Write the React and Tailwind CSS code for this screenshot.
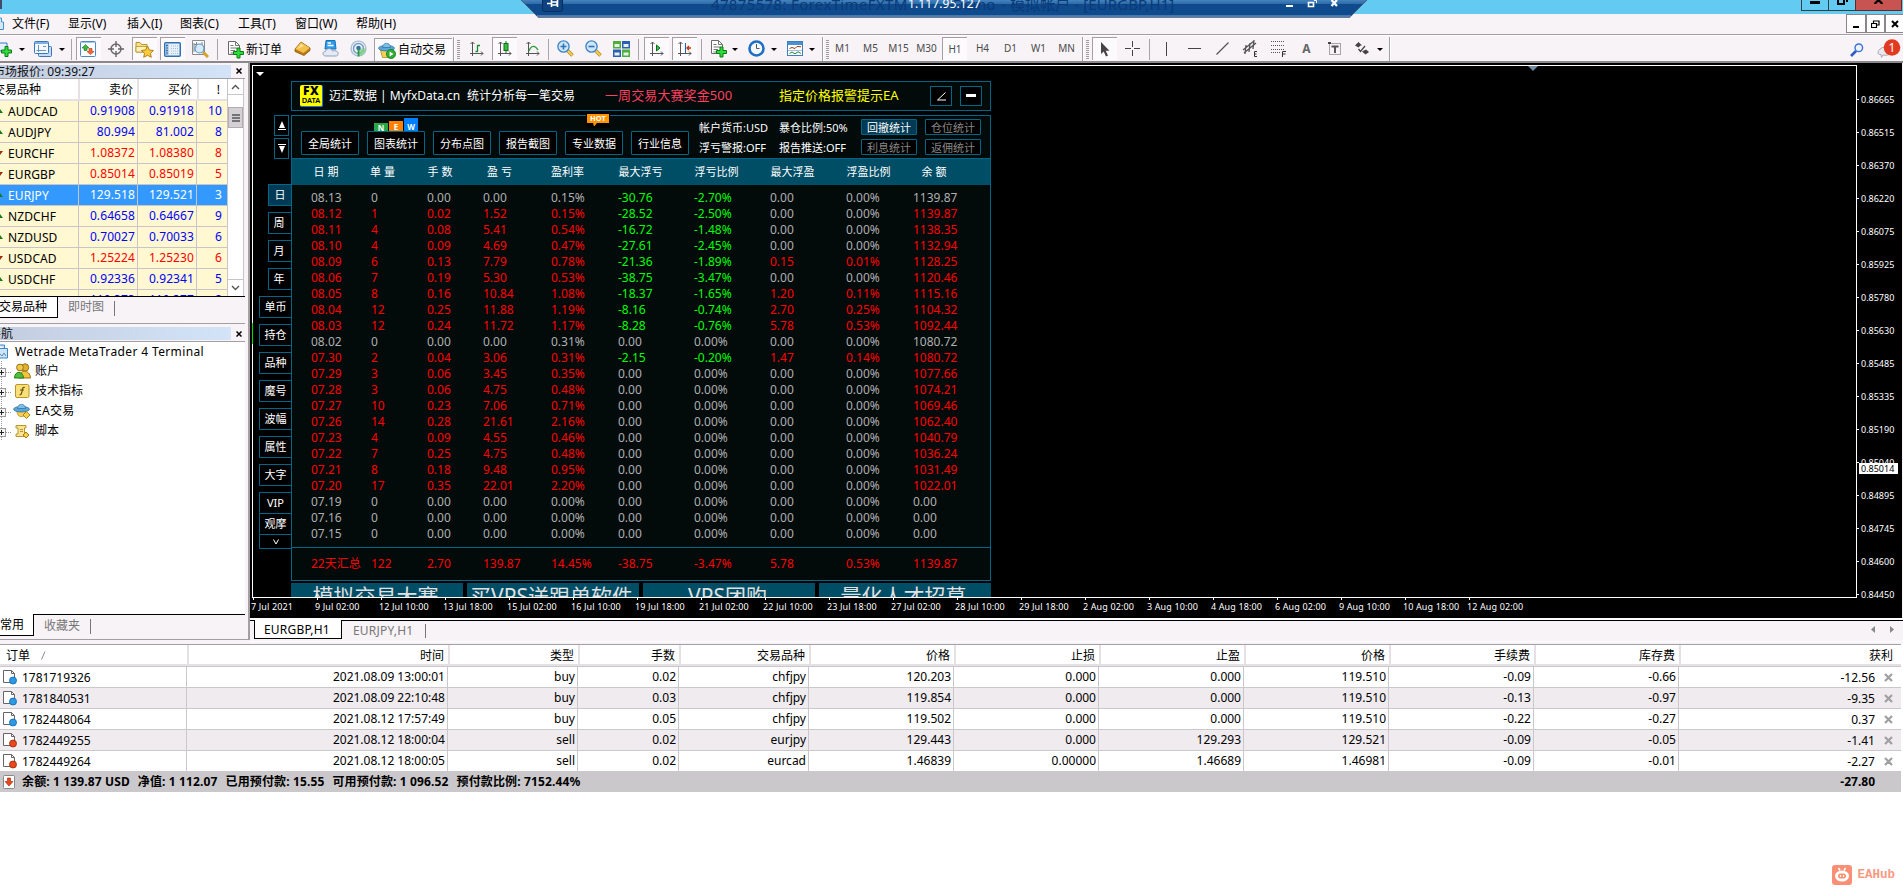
import clsx from 'clsx';

const quotes = [
  ['AUDCAD', '0.91908', '0.91918', '10', 'up'],
  ['AUDJPY', '80.994', '81.002', '8', 'up'],
  ['EURCHF', '1.08372', '1.08380', '8', 'down'],
  ['EURGBP', '0.85014', '0.85019', '5', 'down'],
  ['EURJPY', '129.518', '129.521', '3', 'up', true],
  ['NZDCHF', '0.64658', '0.64667', '9', 'up'],
  ['NZDUSD', '0.70027', '0.70033', '6', 'up'],
  ['USDCAD', '1.25224', '1.25230', '6', 'down'],
  ['USDCHF', '0.92336', '0.92341', '5', 'up'],
  ['USDJPY', '110.373', '110.377', '8', 'up'],
];

const stats = [
  ['08.13', '0', '0.00', '0.00', '0.15%', '-30.76', '-2.70%', '0.00', '0.00%', '1139.87'],
  ['08.12', '1', '0.02', '1.52', '0.15%', '-28.52', '-2.50%', '0.00', '0.00%', '1139.87'],
  ['08.11', '4', '0.08', '5.41', '0.54%', '-16.72', '-1.48%', '0.00', '0.00%', '1138.35'],
  ['08.10', '4', '0.09', '4.69', '0.47%', '-27.61', '-2.45%', '0.00', '0.00%', '1132.94'],
  ['08.09', '6', '0.13', '7.79', '0.78%', '-21.36', '-1.89%', '0.15', '0.01%', '1128.25'],
  ['08.06', '7', '0.19', '5.30', '0.53%', '-38.75', '-3.47%', '0.00', '0.00%', '1120.46'],
  ['08.05', '8', '0.16', '10.84', '1.08%', '-18.37', '-1.65%', '1.20', '0.11%', '1115.16'],
  ['08.04', '12', '0.25', '11.88', '1.19%', '-8.16', '-0.74%', '2.70', '0.25%', '1104.32'],
  ['08.03', '12', '0.24', '11.72', '1.17%', '-8.28', '-0.76%', '5.78', '0.53%', '1092.44'],
  ['08.02', '0', '0.00', '0.00', '0.31%', '0.00', '0.00%', '0.00', '0.00%', '1080.72'],
  ['07.30', '2', '0.04', '3.06', '0.31%', '-2.15', '-0.20%', '1.47', '0.14%', '1080.72'],
  ['07.29', '3', '0.06', '3.45', '0.35%', '0.00', '0.00%', '0.00', '0.00%', '1077.66'],
  ['07.28', '3', '0.06', '4.75', '0.48%', '0.00', '0.00%', '0.00', '0.00%', '1074.21'],
  ['07.27', '10', '0.23', '7.06', '0.71%', '0.00', '0.00%', '0.00', '0.00%', '1069.46'],
  ['07.26', '14', '0.28', '21.61', '2.16%', '0.00', '0.00%', '0.00', '0.00%', '1062.40'],
  ['07.23', '4', '0.09', '4.55', '0.46%', '0.00', '0.00%', '0.00', '0.00%', '1040.79'],
  ['07.22', '7', '0.25', '4.75', '0.48%', '0.00', '0.00%', '0.00', '0.00%', '1036.24'],
  ['07.21', '8', '0.18', '9.48', '0.95%', '0.00', '0.00%', '0.00', '0.00%', '1031.49'],
  ['07.20', '17', '0.35', '22.01', '2.20%', '0.00', '0.00%', '0.00', '0.00%', '1022.01'],
  ['07.19', '0', '0.00', '0.00', '0.00%', '0.00', '0.00%', '0.00', '0.00%', '0.00'],
  ['07.16', '0', '0.00', '0.00', '0.00%', '0.00', '0.00%', '0.00', '0.00%', '0.00'],
  ['07.15', '0', '0.00', '0.00', '0.00%', '0.00', '0.00%', '0.00', '0.00%', '0.00'],
];

const total = ['22天汇总', '122', '2.70', '139.87', '14.45%', '-38.75', '-3.47%', '5.78', '0.53%', '1139.87'];

const times = [
  '7 Jul 2021', '9 Jul 02:00', '12 Jul 10:00', '13 Jul 18:00', '15 Jul 02:00', '16 Jul 10:00', '19 Jul 18:00',
  '21 Jul 02:00', '22 Jul 10:00', '23 Jul 18:00', '27 Jul 02:00', '28 Jul 10:00', '29 Jul 18:00', '2 Aug 02:00',
  '3 Aug 10:00', '4 Aug 18:00', '6 Aug 02:00', '9 Aug 10:00', '10 Aug 18:00', '12 Aug 02:00',
];

const prices = [
  '0.86665', '0.86515', '0.86370', '0.86220', '0.86075', '0.85925', '0.85780', '0.85630',
  '0.85485', '0.85335', '0.85190', '0.85040', '0.84895', '0.84745', '0.84600', '0.84450',
];

const orders = [
  ['1781719326', '2021.08.09 13:00:01', 'buy', '0.02', 'chfjpy', '120.203', '0.000', '0.000', '119.510', '-0.09', '-0.66', '-12.56'],
  ['1781840531', '2021.08.09 22:10:48', 'buy', '0.03', 'chfjpy', '119.854', '0.000', '0.000', '119.510', '-0.13', '-0.97', '-9.35'],
  ['1782448064', '2021.08.12 17:57:49', 'buy', '0.05', 'chfjpy', '119.502', '0.000', '0.000', '119.510', '-0.22', '-0.27', '0.37'],
  ['1782449255', '2021.08.12 18:00:04', 'sell', '0.02', 'eurjpy', '129.443', '0.000', '129.293', '129.521', '-0.09', '-0.05', '-1.41'],
  ['1782449264', '2021.08.12 18:00:05', 'sell', '0.02', 'eurcad', '1.46839', '0.00000', '1.46689', '1.46981', '-0.09', '-0.01', '-2.27'],
];

/* ---------- toolbar parts ---------- */

const Cell = ({ children, pressed }) => (
  <div className="w-7 h-[25px] shrink-0 flex justify-center">
    <div
      className={clsx(
        'w-[25px] h-[23px] flex items-center justify-center',
        pressed && 'bg-[#fcfafc] border-t border-l border-[#a3a0a3] border-r-white border-b-white'
      )}
    >
      {children}
    </div>
  </div>
);

const Sep = ({ className }) => (
  <div className={clsx('flex justify-center shrink-0 h-[21px]', className)}>
    <div className="w-px bg-[#a8a5a8]" />
  </div>
);

const GroupEnd = ({ className }) => (
  <div className={clsx('flex shrink-0 h-[25px]', className)}>
    <div className="w-px bg-[#a0a0a0]" />
    <div className="w-px bg-white" />
  </div>
);

const Grip = ({ className }) => (
  <div className={clsx('shrink-0 flex', className)}>
    <svg width="3" height="20">
      {[0, 2, 4, 6, 8, 10, 12, 14, 16, 18].map((y) => (
        <rect key={y} y={y} width="3" height="1" fill="#a09da0" />
      ))}
    </svg>
  </div>
);

const Caret = () => (
  <svg width="6" height="3" className="shrink-0"><path d="M0 0H6L3 3Z" fill="#000" /></svg>
);

const Plus = ({ x = 0, y = 0 }) => (
  <path transform={`translate(${x} ${y})`} d="M4 0.5H7V4H10.5V7H7V10.5H4V7H0.5V4H4Z" fill="#2fdc3a" stroke="#0a7a18" />
);

const Axes = ({ children }) => (
  <svg width="15" height="16" viewBox="0 0 15 16" fill="none" stroke="#555">
    <path d="M3.5 1V15M1 12.5H14M1.5 3L3.5 1L5.5 3M12 10.5L14 12.5L12 14.5" />
    {children}
  </svg>
);

const Magnifier = ({ minus }) => (
  <svg width="17" height="17" viewBox="0 0 17 17">
    <path d="M10.5 10.5L15.5 15.5" stroke="#b8891a" strokeWidth="3.6" />
    <path d="M10.5 10.5L15.3 15.3" stroke="#f4d35e" strokeWidth="1.8" />
    <circle cx="6.5" cy="6.5" r="5.6" fill="#cfe6f8" stroke="#3f87c8" strokeWidth="1.4" />
    <path d={minus ? 'M3.5 6.5H9.5' : 'M3.5 6.5H9.5M6.5 3.5V9.5'} stroke="#2d73b5" strokeWidth="1.6" />
  </svg>
);

const WindowsIcon = () => (
  <svg width="18" height="18" viewBox="0 0 18 18" stroke="#3b76b8">
    <rect x="4.5" y="5.5" width="13" height="10" rx="1" fill="#c6dcf2" />
    <rect x="0.5" y="0.5" width="14" height="12" rx="1" fill="#f2f8fd" />
    <path d="M1 2H14" strokeWidth="2" stroke="#7fb0de" />
    <path d="M4.5 4V11M2.5 9.5H12M9 5.5H12" stroke="#6a94ba" />
  </svg>
);

const MarketIcon = () => (
  <svg width="17" height="17" viewBox="0 0 17 17">
    <rect x="0.5" y="0.5" width="15" height="15" rx="1" fill="#fff" stroke="#4a88c6" />
    <path d="M1 1.5H15" stroke="#a4c8ea" />
    <path d="M5.5 3.5L9 7H7V9.5H4V7H2Z" fill="#3cb93c" stroke="#0f7d1c" strokeWidth=".6" />
    <path d="M10.5 13.5L7 10.500H9V7.500H12V10.500H14Z" fill="#f06a3c" stroke="#b6310c" strokeWidth=".6" />
  </svg>
);

const TargetIcon = () => (
  <svg width="16" height="16" viewBox="0 0 16 16" fill="none" stroke="#666" strokeWidth="1.4">
    <circle cx="8" cy="8" r="5" />
    <path d="M8 0V6M8 10V16M0 8H6M10 8H16" />
  </svg>
);

const FolderStar = () => (
  <svg width="19" height="17" viewBox="0 0 19 17">
    <path d="M1 1.500H5L6.500 3.500H12V11H1Z" fill="#f9e08c" stroke="#b99228" />
    <path d="M1 5.500H12V11H1Z" fill="#fff2b8" stroke="#b99228" strokeWidth=".8" />
    <path d="M12.500 5L14.400 9L18.500 9.500L15.500 12.300L16.300 16.300L12.500 14.300L8.700 16.300L9.500 12.300L6.500 9.500L10.600 9Z" fill="#fbc93a" stroke="#a8780f" strokeWidth=".9" />
  </svg>
);

const NavIcon = () => (
  <svg width="17" height="15" viewBox="0 0 17 15">
    <rect x="0.750" y="0.750" width="15.500" height="13.500" rx="1" fill="#e6f1fb" stroke="#2e70b4" strokeWidth="1.500" />
    <rect x="1.500" y="1.500" width="3" height="12" fill="#8fbbe4" />
    <path d="M7 4H14M7 6.500H14M7 9H14M7 11.500H14" stroke="#a8bfd6" strokeDasharray="1 1" />
    <path d="M3 3V12" stroke="#123" strokeDasharray="1 1.500" />
  </svg>
);

const TesterIcon = () => (
  <svg width="18" height="18" viewBox="0 0 18 18">
    <path d="M1.500 0.500H13.500V14.500H1.500Z" fill="#fafafa" stroke="#8a8a8a" />
    <path d="M3 3V12M5.500 2V8M11 2V6M3 4.500H5" stroke="#7a8898" />
    <path d="M12 12L17 17" stroke="#d4a12a" strokeWidth="3" />
    <circle cx="8.500" cy="8.500" r="4.500" fill="#cfe5f7cc" stroke="#5d93c5" strokeWidth="1.200" />
  </svg>
);

const NewDoc = () => (
  <svg width="17" height="18" viewBox="0 0 17 18">
    <path d="M1.500 0.500H8.500L12.500 4.500V13.500H1.500Z" fill="#fff" stroke="#6a6a6a" />
    <path d="M8.500 0.500V4.500H12.500M3.500 4.500H6.500M3.500 7H10M3.500 9.500H8M3.500 12H7" stroke="#777" fill="none" />
    <Plus x={6} y={6.5} />
  </svg>
);

const BookIcon = () => (
  <svg width="17" height="15" viewBox="0 0 17 15">
    <path d="M1 8L7 1L16 7V9.500L10 14.500L1 10.500Z" fill="#b87a14" stroke="#8d5a08" strokeWidth=".8" />
    <path d="M1.300 8L7 1.300L15.700 7L9.500 12Z" fill="#f5c14a" />
    <path d="M3 8L7.200 3L10 5Z" fill="#fde29a" />
  </svg>
);

const CloudIcon = () => (
  <svg width="17" height="17" viewBox="0 0 17 17">
    <path d="M4 0.500H13L14 9H3Z" fill="#2f9bea" stroke="#1670ba" />
    <path d="M5.500 5.500H11.500M5.500 3H9" stroke="#fff" strokeWidth="1.300" />
    <path d="M4 16C0 16 0 11.500 3.500 11.500C4 8 9.500 7.500 10.500 11C14 9.800 17 12 16 14.500C15.700 15.700 15 16 13.500 16Z" fill="#e3eaf4" stroke="#8597b4" strokeWidth=".9" />
  </svg>
);

const SignalIcon = () => (
  <svg width="17" height="17" viewBox="0 0 17 17" fill="none">
    <circle cx="8.500" cy="8.500" r="7.400" stroke="#a9c0d4" strokeWidth="1.400" />
    <circle cx="8.500" cy="8.500" r="5" stroke="#6f9ec6" strokeWidth="1.500" />
    <path d="M8.500 8.500V16.500A8 8 0 0 0 16 8.500Z" fill="#7fcf86" opacity=".75" />
    <circle cx="8.500" cy="8" r="2.300" fill="#3271ae" />
    <path d="M8.500 9V16.500" stroke="#2a9a3c" strokeWidth="1.800" />
  </svg>
);

const Expert = ({ play }) => (
  <svg width="18" height="17" viewBox="0 0 18 17">
    {play && <path d="M2.500 8L4.500 15.500H12L14 8Z" fill="#f6ce58" stroke="#b48a1a" strokeWidth=".8" />}
    {!play && <path d="M4 8C4 13 7 14.500 11 13L13 8Z" fill="#f6ce58" stroke="#b48a1a" strokeWidth=".8" />}
    <ellipse cx="8.500" cy="6.200" rx="8" ry="2.800" fill="#59a7d8" stroke="#2b6f9f" strokeWidth=".7" />
    <path d="M4.500 5.500C4.500 0 12.500 0 12.500 5.500Z" fill="#7cc0ea" stroke="#2b6f9f" strokeWidth=".7" />
    {play ? (
      <>
        <circle cx="13" cy="12" r="4.600" fill="#2fae2f" stroke="#127012" strokeWidth=".7" />
        <path d="M11.600 9.500L15.500 12L11.600 14.500Z" fill="#fff" />
      </>
    ) : (
      <path d="M13.500 8.500L17 12L13.500 15.500L10 12Z" fill="#f6cf4c" stroke="#a57c10" strokeWidth=".9" />
    )}
  </svg>
);

const Tiles = () => (
  <svg width="17" height="16" viewBox="0 0 17 16">
    <rect width="8" height="7.500" fill="#4caf3a" /><rect x="9" width="8" height="7.500" fill="#2c5fb8" />
    <rect y="8.500" width="8" height="7.500" fill="#2c5fb8" /><rect x="9" y="8.500" width="8" height="7.500" fill="#4caf3a" />
    <path d="M1.500 3H6.500V6H1.500ZM10.500 3H15.500V6H10.500ZM1.500 11.500H6.500V14.500H1.500ZM10.500 11.500H15.500V14.500H10.500Z" fill="#e8f3e6" />
  </svg>
);

const Clock = () => (
  <svg width="17" height="17" viewBox="0 0 17 17">
    <circle cx="8.500" cy="8.500" r="7" fill="#f3f7fb" stroke="#1f6fc4" strokeWidth="2.600" />
    <path d="M8.500 4V8.500H11.500" stroke="#555" fill="none" />
  </svg>
);

const Template = () => (
  <svg width="17" height="16" viewBox="0 0 17 16" fill="none">
    <rect x="0.500" y="0.500" width="15" height="14" fill="#fff" stroke="#3a7fc0" />
    <path d="M1 2.500H15" stroke="#4a90d2" strokeWidth="3" />
    <path d="M2.500 7.500L5 6.500L8 7.500L10 5.500L14 5.800" stroke="#9a3a1a" />
    <path d="M1 9.500H15" stroke="#9cc0e0" />
    <path d="M2.500 12.500L5 11L8 12.800L11 10.800L14 12.500" stroke="#2a8a3a" />
  </svg>
);

function Toolbar() {
  return (
    <div className="h-[26px] pt-[2px] flex items-center bg-[#f7f3f7] border-t border-white shrink-0 overflow-hidden text-[10px] text-[#4a4a4a]">
      <div className="w-7 shrink-0 flex items-center gap-[7px]">
        <svg width="12" height="16" viewBox="0 0 12 16">
          <path d="M0 1H7V9H0" fill="#e4f0fb" stroke="#3b76b8" />
          <Plus x={1} y={4} />
        </svg>
        <Caret />
      </div>
      <div className="w-10 shrink-0 flex items-center gap-[7px] pl-1.5"><WindowsIcon /><Caret /></div>
      <Sep className="w-1.5" />
      <Cell pressed><MarketIcon /></Cell>
      <Cell><TargetIcon /></Cell>
      <Cell pressed><FolderStar /></Cell>
      <Cell pressed><NavIcon /></Cell>
      <Cell><TesterIcon /></Cell>
      <Sep className="w-[7px]" />
      <div className="w-[67px] shrink-0 pl-[6px] flex items-center gap-[2px] text-xs text-black whitespace-nowrap">
        <NewDoc /><span className="leading-4">新订单</span>
      </div>
      <Cell><BookIcon /></Cell>
      <Cell><CloudIcon /></Cell>
      <Cell><SignalIcon /></Cell>
      <div className="ml-[2px] w-[78px] h-[23px] shrink-0 flex items-center gap-[2px] pl-[3px] text-xs text-black bg-[#fcfafc] border-t border-l border-[#a3a0a3]">
        <Expert play /><span className="leading-4 whitespace-nowrap">自动交易</span>
      </div>
      <GroupEnd className="w-1 ml-px" />
      <Grip className="w-[5px]" />
      <Cell><Axes><path d="M8.500 4V11M8.500 10.500H6.500M8.500 4.500H11" stroke="#1e8a2e" strokeWidth="1.300" /></Axes></Cell>
      <Cell pressed><Axes><path d="M9 0V12" stroke="#146b20" /><rect x="7" y="2.500" width="4" height="7" fill="#2fc43a" stroke="#146b20" /></Axes></Cell>
      <Cell><Axes><path d="M4 10C6 4 10 4 13 9" stroke="#2a9a3a" strokeWidth="1.300" /></Axes></Cell>
      <Sep className="w-[5px]" />
      <Cell><Magnifier /></Cell>
      <Cell><Magnifier minus /></Cell>
      <Cell><Tiles /></Cell>
      <Sep className="w-[7px]" />
      <Cell pressed><Axes><path d="M7.500 4L11 7L7.500 10Z" fill="#2fc43a" stroke="#146b20" /></Axes></Cell>
      <Cell pressed><Axes><path d="M8.500 2V12" stroke="#1f5fa8" /><path d="M14 7H10M12 5L10 7L12 9" stroke="#c03a10" strokeWidth="1.400" /></Axes></Cell>
      <Sep className="w-1.5" />
      {[NewDoc, Clock, Template].map((Icon, i) => (
        <div key={i} className="w-[38.500px] shrink-0 flex items-center">
          <Cell><Icon /></Cell><Caret />
        </div>
      ))}
      <GroupEnd className="w-1 ml-[2px]" />
      <Grip className="w-[3px]" />
      {['M1', 'M5', 'M15', 'M30', 'H1', 'H4', 'D1', 'W1', 'MN'].map((tf) => (
        <Cell key={tf} pressed={tf === 'H1'}>{tf}</Cell>
      ))}
      <GroupEnd className="w-1 ml-px" />
      <Grip className="w-[5px]" />
      <Cell pressed>
        <svg width="11" height="15" viewBox="0 0 11 15"><path d="M1 0V12L3.700 9.500L6 14.500L8 13.500L5.700 8.800H9.500Z" fill="#444" /></svg>
      </Cell>
      <Cell><svg width="15" height="15"><path d="M7.500 0V6M7.500 9V15M0 7.500H6M9 7.500H15" stroke="#444" /></svg></Cell>
      <Sep className="w-1.5" />
      <Cell><svg width="15" height="14"><path d="M7.500 0V14" stroke="#444" /></svg></Cell>
      <Cell><svg width="13" height="13"><path d="M0 6.500H13" stroke="#444" /></svg></Cell>
      <Cell><svg width="13" height="13"><path d="M0.500 12.500L12.500 0.500" stroke="#555" strokeWidth="1.200" /></svg></Cell>
      <Cell>
        <svg width="17" height="17" viewBox="0 0 17 17" fill="none" stroke="#555">
          <path d="M1 10L12 1M2 13L14 3M4 5L3 14M8 3L7 12M12 0L11 9" strokeWidth="1.300" />
          <path d="M15 11.500H12.500V16.500H15M12.500 14H14.500" stroke="#333" />
        </svg>
      </Cell>
      <Cell>
        <svg width="15" height="17" viewBox="0 0 15 17" fill="none" stroke="#555">
          <path d="M0 1.500H14M0 5.500H14M0 9.500H14M0 12.500H9" strokeDasharray="1 1" />
          <path d="M11.500 17V11.500H15M11.500 14H14.500" stroke="#333" />
        </svg>
      </Cell>
      <Cell><span className="text-[12px] font-bold text-[#666]">A</span></Cell>
      <Cell>
        <svg width="14" height="14" viewBox="0 0 14 14" fill="none">
          <rect x="1.500" y="1.500" width="11" height="11" stroke="#555" strokeDasharray="1 1" />
          <rect width="3" height="2" fill="#444" />
          <path d="M3.500 4.500H10.500M7 4.500V11" stroke="#555" strokeWidth="2" />
        </svg>
      </Cell>
      <Cell>
        <svg width="15" height="13" viewBox="0 0 15 13">
          <path d="M3.500 0L7 3.500H5.500L3.500 5.500L0 3.500ZM10.500 12.500L7 9.500L9 8.500L11 7.500L14 10Z" fill="#444" />
          <path d="M3.500 7L5.500 9.500L10 4" stroke="#444" fill="none" strokeWidth="1.300" />
        </svg>
      </Cell>
      <Caret />
      <GroupEnd className="w-1 ml-[6px]" />
      <div className="flex-1" />
      <svg width="14" height="14" viewBox="0 0 14 14" fill="none" className="shrink-0">
        <path d="M1 13L6 8" stroke="#2a5fc0" strokeWidth="2.600" />
        <circle cx="8.800" cy="4.800" r="3.800" stroke="#3a72d8" strokeWidth="1.400" fill="#eef4ff" />
      </svg>
      <svg width="27" height="22" viewBox="0 0 27 22" className="ml-[12px] -mt-[2px] shrink-0">
        <path d="M2 15C2 11 7 8 13 9L15 15C13 17.500 9 17.500 7 17L5.500 19.500L5 16.500C3 16.500 2 16 2 15Z" fill="#e8e8ee" stroke="#a8a8b0" />
        <circle cx="16" cy="9.500" r="8.300" fill="#e23a20" />
        <text x="16" y="13.700" textAnchor="middle" fontSize="12" fill="#fff">1</text>
      </svg>
    </div>
  );
}

/* ---------- title + menu ---------- */

function TitleBar() {
  return (
    <div className="h-[14px] bg-[#63cbf1] flex justify-end relative shrink-0">
      <div className="absolute left-0 top-0 w-[2px] h-[9px] bg-[#444b6a]" />
      {/* remote session bar hangs from the top edge over the menu */}
      <div className="absolute left-[521px] top-0 w-[847px] h-[18px] z-10">
        <svg width="847" height="18" className="absolute inset-0">
          <defs>
            <linearGradient id="rdp" x1="0" y1="0" x2="0" y2="1">
              <stop offset="0" stopColor="#4584bd" />
              <stop offset=".2" stopColor="#2f6dab" />
              <stop offset=".21" stopColor="#0f4a8c" />
              <stop offset="1" stopColor="#0f4a8c" />
            </linearGradient>
          </defs>
          <path d="M0 0H846L829 17.500H17Z" fill="url(#rdp)" />
          <path d="M0 0L17 17H829L846 0" fill="none" stroke="#4a5a78" />
          <path d="M16 16H830" stroke="#7fa6cf" />
        </svg>
        <div className="relative h-4 pl-[190px] -mt-[5px] flex text-[15px] leading-[18px] text-[#0a3a78] whitespace-nowrap">
          <span className="w-[237px] tracking-[0.35px]">47875578: ForexTimeFXTM</span>
          <span className="w-[53px]">-Demo</span>
          <span className="tracking-[0.1px]">- 模拟帐户 - [EURGBP,H1]</span>
        </div>
        <span className="absolute left-[387px] -top-[4px] text-[12px] leading-4 tracking-[0.1px] text-white">1.117.95.127</span>
        <svg width="22" height="12" className="absolute left-[21px] top-0">
          <rect x=".5" y="-5" width="20" height="16.500" rx="2" fill="#0f4380" stroke="#072c5c" />
          <path d="M5 3.500H9M9.500 0V7M9.500 2H15V5H9.500M15.500 0V7" stroke="#fff" strokeWidth="1.600" fill="none" />
        </svg>
        <svg width="60" height="8" className="absolute left-[764px] top-0" fill="none" stroke="#fff">
          <path d="M1 6H8" strokeWidth="2" />
          <path d="M23.500 2.500H28.500V6.500H23.500Z" strokeWidth="1.600" />
          <path d="M29 0.500H31.500V3" />
          <path d="M46.500 0L52 6M52 0L46.500 6" strokeWidth="2.200" />
        </svg>
      </div>
      <div className="flex h-[11px] mr-[1px]">
        <div className="w-[28px] border border-t-0 border-[#33403f] flex justify-center"><div className="w-[10px] h-[3px] mt-px bg-black" /></div>
        <div className="w-[26px] border-b border-[#33403f] flex justify-center">
          <svg width="11" height="5"><path d="M1 0V4H7V0M10 0V2" fill="none" stroke="#000" strokeWidth="2" /></svg>
        </div>
        <div className="w-[47px] border border-t-0 border-[#5d2b2b] bg-[#c75450] flex justify-center">
          <svg width="9" height="4"><path d="M0.500 4L4.500 0L8.500 4" fill="none" stroke="#000" strokeWidth="2.200" /></svg>
        </div>
      </div>
    </div>
  );
}

function MenuBar() {
  const items = [
    ['文件(F)', 'w-14'], ['显示(V)', 'w-[59px]'], ['插入(I)', 'w-[53px]'], ['图表(C)', 'w-[58px]'],
    ['工具(T)', 'w-[57px]'], ['窗口(W)', 'w-[61px]'], ['帮助(H)', 'w-14'],
  ];
  return (
    <div className="h-[21px] flex items-center bg-[#f7f3f7] border-b border-[#a39fa3] text-xs text-black shrink-0">
      <svg width="4" height="14" className="mr-2"><path d="M0 1H1.500V5H3.500V12.500H0" fill="#d3e9fa" stroke="#4a90c8" /></svg>
      {items.map(([label, w]) => (
        <div key={label} className={clsx('leading-4 shrink-0 whitespace-nowrap', w)}>{label}</div>
      ))}
      <div className="ml-auto self-start flex h-[19px]">
        <div className="w-[20px] border border-[#8a858a] bg-white flex items-center justify-center"><div className="w-[6px] h-[2px] mt-[7px] bg-black" /></div>
        <div className="w-[19px] border border-[#8a858a] bg-white flex items-center justify-center">
          <svg width="9" height="8" fill="none" stroke="#000"><path d="M0.500 3.500H5.500V7.500H0.500ZM2.500 3V1H8V5H6" strokeWidth="1.200" /></svg>
        </div>
        <div className="w-[18px] border border-r-0 border-[#8a858a] bg-white flex items-center justify-center">
          <svg width="8" height="8"><path d="M1 1L7 7M7 1L1 7" stroke="#000" strokeWidth="2" /></svg>
        </div>
      </div>
    </div>
  );
}

/* ---------- left side ---------- */

const PanelTitle = ({ children, shift, className }) => (
  <div className={clsx('flex items-center bg-[#f7f3f7] shrink-0', className)}>
    <div className="w-[231px] h-[13px] overflow-hidden bg-linear-to-r from-[#c3cde0] to-[#d3e4f8] text-xs leading-[13px] text-[#111]">
      <div className={clsx('whitespace-nowrap', shift)}>{children}</div>
    </div>
    <svg width="6" height="6" className="ml-[5px]"><path d="M0.500 0.500L5.500 5.500M5.500 0.500L0.500 5.500" stroke="#000" strokeWidth="1.500" /></svg>
  </div>
);

function MarketWatch() {
  return (
    <div className="flex flex-col shrink-0 h-[260px]">
      <PanelTitle className="mt-px h-[14px]" shift="-ml-[7px]">市场报价: 09:39:27</PanelTitle>
      <div className="flex h-[218px] border-t border-[#a39fa3] overflow-hidden shrink-0">
        <div className="w-[227px] shrink-0 text-xs">
          <div className="flex h-[22px] leading-[21px] border-b-2 border-[#e4e0e4] bg-white text-black">
            <div className="w-[80px] border-r-2 border-[#e4e0e4]"><span className="-ml-[7px]">交易品种</span></div>
            <div className="w-[59px] border-r-2 border-[#e4e0e4] text-right pr-1">卖价</div>
            <div className="w-[60px] border-r-2 border-[#e4e0e4] text-right pr-[5px]">买价</div>
            <div className="w-[28px] text-right pr-[7px]">!</div>
          </div>
          {quotes.map(([name, bid, ask, spread, dir, selected]) => (
            <div
              key={name}
              className={clsx(
                'flex h-[21px] leading-[19px] border-b border-[#c8c4c8] tracking-[0.1px]',
                selected ? 'bg-[#3399ff] text-white' : 'bg-[#fff8d1]',
                !selected && (dir === 'up' ? 'text-[#0000ff]' : 'text-[#ff0000]')
              )}
            >
              <div className={clsx('w-[79px] border-r border-[#c8c4c8] flex items-center', !selected && 'text-black')}>
                <svg width="3" height="4" className="mr-[5px]">
                  <path d={dir === 'up' ? 'M0 0L3 4H0Z' : 'M0 0H3L0 4Z'} fill={dir === 'up' ? '#1a7a1a' : '#a02a10'} />
                </svg>
                {name}
              </div>
              <div className="w-[59px] border-r border-[#c8c4c8] text-right pr-[2px]">{bid}</div>
              <div className="w-[59px] border-r border-[#c8c4c8] text-right pr-[2px]">{ask}</div>
              <div className="w-[30px] text-right pr-[5px]">{spread}</div>
            </div>
          ))}
        </div>
        <div className="w-[17px] flex flex-col border-x border-[#c8c4c8] bg-white">
          <div className="h-4 flex items-center justify-center border-b border-[#c8c4c8]">
            <svg width="9" height="6"><path d="M1 5L4.500 1.500L8 5" fill="none" stroke="#555" strokeWidth="1.400" /></svg>
          </div>
          <div className="mt-[12px] h-[21px] border border-[#b0acb0] bg-[#d4d0d4] flex items-center justify-center">
            <svg width="8" height="8"><path d="M0 1H8M0 4H8M0 7H8" stroke="#555" strokeWidth="1.500" /></svg>
          </div>
          <div className="mt-auto h-[17px] flex items-center justify-center border-t border-[#c8c4c8]">
            <svg width="9" height="6"><path d="M1 1L4.500 4.500L8 1" fill="none" stroke="#555" strokeWidth="1.400" /></svg>
          </div>
        </div>
      </div>
      <div className="flex h-[25px] border-t border-black bg-[#f7f3f7] text-xs shrink-0 overflow-hidden">
        <div className="w-[58px] h-[22px] -mt-px bg-white border-r border-b border-black leading-[21px] whitespace-nowrap"><span className="-ml-px">交易品种</span></div>
        <div className="ml-[10px] leading-[20px] text-[#777]">即时图</div>
        <div className="ml-[10px] mt-[4px] h-[15px] w-px bg-[#777]" />
      </div>
    </div>
  );
}

const TreeRow = ({ icon, children }) => (
  <div className="flex items-center h-5">
    <svg width="13" height="20" className="shrink-0">
      <path d="M1.500 0V20M6 11.500H12" stroke="#999" strokeDasharray="1 1" />
      <rect x="-2.500" y="7.500" width="8" height="8" fill="#f4f4f4" stroke="#999" />
      <path d="M0 11.500H4M1.500 9V14" stroke="#222" />
    </svg>
    <div className="w-[18px] flex justify-center">{icon}</div>
    <span className="ml-[4px] leading-5">{children}</span>
  </div>
);

function Navigator() {
  return (
    <div className="flex flex-col flex-1 min-h-0 border-t border-[#a39fa3]">
      <PanelTitle className="mt-[2px] h-[15px]" shift="-ml-[11px]">导航</PanelTitle>
      <div className="flex-1 min-h-0 border-t border-[#a39fa3] bg-white text-xs text-black">
        <div className="flex items-center h-[19px] tracking-[0.37px]">
          <svg width="9" height="15">
            <path d="M-2 1H4.500V5M-2 4.500H7.500V14H-2Z" fill="#cfe4f7" stroke="#3a86c8" />
            <path d="M0 10L2 12L4 9L6 12" fill="none" stroke="#5c8ab8" />
          </svg>
          <span className="ml-[6px]">Wetrade MetaTrader 4 Terminal</span>
        </div>
        <TreeRow
          icon={
            <svg width="17" height="16" viewBox="0 0 17 16">
              <circle cx="11" cy="4.500" r="3.700" fill="#e0b030" stroke="#9a7210" />
              <path d="M5 15C5 6 16 6 16.500 15Z" fill="#f0c43c" stroke="#9a7210" />
              <circle cx="6" cy="4.500" r="3.400" fill="#f0c84a" stroke="#9a7210" />
              <path d="M0.500 15C0.500 7.500 9 7.500 9.500 15Z" fill="#4cc03a" stroke="#257a18" />
            </svg>
          }
        >
          账户
        </TreeRow>
        <TreeRow
          icon={
            <svg width="15" height="14" viewBox="0 0 15 14">
              <rect x=".5" y=".5" width="13.500" height="13" rx="1.500" fill="#f9df78" stroke="#bb9428" />
              <path d="M9.800 3.500C7.500 2.500 7.500 5 7 7.500C6.500 10 6 11 4.500 10.700M5 6H9" fill="none" stroke="#6a5310" strokeWidth="1.200" />
            </svg>
          }
        >
          技术指标
        </TreeRow>
        <TreeRow icon={<Expert />}><span className="tracking-[0.3px]">EA交易</span></TreeRow>
        <TreeRow
          icon={
            <svg width="15" height="15" viewBox="0 0 15 15">
              <path d="M1 1.500H11V4H9.500V10H12V12.500H1V10H3V4H1Z" fill="#fae494" stroke="#b8942c" />
              <path d="M5 5.500H8M5 7.500H8" stroke="#b8942c" />
              <path d="M11 8L14 11L11 14L8 11Z" fill="#f6cf4c" stroke="#a57c10" />
            </svg>
          }
        >
          脚本
        </TreeRow>
      </div>
      <div className="flex h-[25px] border-t border-black bg-[#f7f3f7] text-xs shrink-0">
        <div className="w-[34px] h-[22px] -mt-px bg-white border-r border-b border-black leading-[22px]">常用</div>
        <div className="ml-[10px] leading-[21px] text-[#777]">收藏夹</div>
        <div className="ml-[10px] mt-[4px] h-[15px] w-px bg-[#777]" />
      </div>
    </div>
  );
}

/* ---------- chart ---------- */

const SideButton = ({ children, className }) => (
  <div
    className={clsx(
      'border border-r-0 border-[#006688] rounded-l-[1px] text-[11px] text-white flex items-center justify-center',
      className
    )}
  >
    {children}
  </div>
);

function SideTabs() {
  return (
    <div className="w-[38px] shrink-0 flex flex-col items-end">
      <svg width="8" height="4" className="self-start ml-[3px] mt-[6px]"><path d="M0 0H8L4 4Z" fill="#fff" /></svg>
      <div className="mt-[39px] mr-[2px] w-[15px] h-[21px] border border-[#006688] flex items-center justify-center">
        <svg width="8" height="9"><path d="M4 0L7 7H1ZM0 8H8V9H0Z" fill="#fff" /></svg>
      </div>
      <div className="mt-[2px] mr-[2px] w-[15px] h-[21px] border border-[#006688] flex items-center justify-center">
        <svg width="8" height="9"><path d="M4 9L7 2H1ZM0 0H8V1H0Z" fill="#fff" /></svg>
      </div>
      <div className="mt-[25px] flex flex-col items-end gap-1.5">
        <SideButton className="w-[23px] h-[22px] bg-[#003a54]">日</SideButton>
        {['周', '月', '年'].map((t) => (
          <SideButton key={t} className="w-[23px] h-[22px] pr-[2px]">{t}</SideButton>
        ))}
        {['单币', '持仓', '品种', '魔号', '波幅', '属性', '大字'].map((t) => (
          <SideButton key={t} className="w-8 h-[22px]">{t}</SideButton>
        ))}
      </div>
      <SideButton className="mt-1.5 w-8 h-[21px] border-b-0">VIP</SideButton>
      <SideButton className="w-8 h-[21px] border-b-0">观摩</SideButton>
      <SideButton className="w-8 h-[15px]">
        <svg width="6" height="6"><path d="M0.500 0.500L3 5L5.500 0.500" fill="none" stroke="#fff" /></svg>
      </SideButton>
    </div>
  );
}

const cols = ['w-[60px]', 'w-[56px]', 'w-[56px]', 'w-[68px]', 'w-[67px]', 'w-[76px]', 'w-[76px]', 'w-[76px]', 'w-[67px]', 'w-[60px]'];
const toneClass = { red: 'text-[#ff0000]', green: 'text-[#00ff00]', gray: 'text-[#b0b0b0]' };

const tone = (row, i) => {
  if (row === total) return 'red';
  if (i < 5) return row[1] === '0' ? 'gray' : 'red';
  if (i === 9) return row[1] === '0' ? 'gray' : 'red';
  if (row[i].startsWith('-')) return 'green';
  return Number.parseFloat(row[i]) > 0 ? 'red' : 'gray';
};

const StatRow = ({ row }) => (
  <div className="flex h-4 pl-[19px] leading-4">
    {row.map((cell, i) => (
      <div key={i} className={clsx('shrink-0 whitespace-nowrap', cols[i], toneClass[tone(row, i)])}>{cell}</div>
    ))}
  </div>
);

const Tool = ({ children }) => (
  <div className="w-[58px] h-6 shrink-0 border border-[#006688] rounded-[1px] bg-black flex items-center justify-center text-[11px] leading-none whitespace-nowrap">
    {children}
  </div>
);

const Pill = ({ children, on }) => (
  <div
    className={clsx(
      'w-[56px] h-4 border border-[#006688] rounded-[1px] flex items-center justify-center text-[11px] leading-none whitespace-nowrap',
      on ? 'bg-[#003a54] text-white' : 'bg-black text-[#888]'
    )}
  >
    {children}
  </div>
);

function FxPanel() {
  return (
    <div className="w-[700px] shrink-0 pt-[15px] text-xs text-white">
      <div className="h-[30px] flex items-center border border-[#006688] bg-[#020a0a] pl-[8px] whitespace-nowrap">
        <div className="w-[23px] h-[22px] rounded-[2px] bg-[#ffff00] border-r border-b border-[#1b6fd0] text-black text-center flex flex-col items-center pt-px overflow-hidden">
          <span className="text-[12px] leading-[10px] font-black tracking-[0.5px]">FX</span>
          <span className="text-[7.500px] leading-[9px] font-semibold">DATA</span>
        </div>
        <span className="ml-[6px] w-[138px]">迈汇数据 | MyfxData.cn</span>
        <span className="w-[138px]">统计分析每一笔交易</span>
        <span className="w-[174px] text-[13px] tracking-[0.1px] text-[#ff4060]">一周交易大赛奖金500</span>
        <span className="w-[152px] text-[13px] text-[#ffff00]">指定价格报警提示EA</span>
        <div className="-ml-px w-[22px] h-5 border border-[#006688] bg-black flex items-center justify-center">
          <svg width="9" height="9"><path d="M8.500 0.500L0.500 8H9" fill="none" stroke="#fff" /></svg>
        </div>
        <div className="ml-[8px] w-[22px] h-5 border border-[#006688] bg-black flex items-center justify-center">
          <div className="w-[10px] h-[3px] -mt-px bg-white" />
        </div>
      </div>

      <div className="mt-1 h-[466px] border border-[#006688] bg-[#020a0a] flex flex-col">
        <div className="relative h-[42px] shrink-0 flex">
          <div className="flex gap-2 pl-[9px] pt-[15px]">
            {['全局统计', '图表统计', '分布点图', '报告截图', '专业数据', '行业信息'].map((t) => <Tool key={t}>{t}</Tool>)}
          </div>
          <div className="absolute left-[82px] top-[2px] flex items-end gap-px text-[8px] font-bold leading-[9px] text-center">
            <div className="w-[14px] h-[8px] bg-[#28a745]">N</div>
            <div className="w-[14px] h-[10px] bg-[#ff8000] leading-[12px]">E</div>
            <div className="w-[14px] h-[13px] bg-[#0080ff] leading-[17px]">W</div>
          </div>
          <div className="absolute left-[294px] -top-[3px] w-[24px] h-[15px] bg-black">
            <svg width="24" height="14" className="absolute left-px top-0"><path d="M0 1H22V10H10L7 13.500L6 10H0Z" fill="#ff9400" /></svg>
            <span className="absolute left-[2px] top-[1px] w-[20px] text-center text-[7.500px] leading-[9px] font-bold">HOT</span>
          </div>
          <div className="pl-[10px] pt-[2px] w-[162px] flex flex-wrap content-start text-[11px] leading-5 whitespace-nowrap">
            <span className="w-[80px]">帐户货币:USD</span>
            <span className="w-[70px]">暴仓比例:50%</span>
            <span className="w-[80px]">浮亏警报:OFF</span>
            <span className="w-[70px]">报告推送:OFF</span>
          </div>
          <div className="ml-[10px] mt-[3px] w-[121px] flex flex-wrap content-start gap-x-2 gap-y-1">
            <Pill on>回撤统计</Pill><Pill>仓位统计</Pill>
            <Pill>利息统计</Pill><Pill>返佣统计</Pill>
          </div>
        </div>
        <div className="h-[27px] shrink-0 flex bg-[#004d66] border-t border-[#006688] text-[11px] leading-[25px] text-center whitespace-pre">
          <div className="w-[68px]">日 期</div>
          <div className="w-[45px]">单 量</div>
          <div className="w-[70px]">手 数</div>
          <div className="w-[49px]">盈 亏</div>
          <div className="w-[87px]">盈利率</div>
          <div className="w-[59px]">最大浮亏</div>
          <div className="w-[93px]">浮亏比例</div>
          <div className="w-[59px]">最大浮盈</div>
          <div className="w-[93px]">浮盈比例</div>
          <div className="w-[38px]">余 额</div>
        </div>
        <div className="flex-1 pt-[5px]">
          {stats.map((row) => <StatRow key={row[0]} row={row} />)}
        </div>
        <div className="h-[33px] shrink-0 border-t border-[#006688] pt-[8px]">
          <StatRow row={total} />
        </div>
      </div>

      <div className="mt-[2px] flex gap-1 text-[21px] leading-[26px] text-[#e0e0e0]">
        {['模拟交易大赛', '买VPS送跟单软件', 'VPS团购', '量化人才招募'].map((t) => (
          <div key={t} className="w-[172px] h-[27px] bg-[#004d66] text-center whitespace-nowrap overflow-hidden pr-[3px]">{t}</div>
        ))}
      </div>
    </div>
  );
}

function Chart() {
  return (
    <div className="h-[555px] shrink-0 bg-black flex flex-col pt-[2px] pl-[2px] mr-px relative text-white">
      <div className="flex h-[533px] shrink-0">
        <div className="relative w-[1605px] shrink-0 border border-white overflow-hidden flex">
          <SideTabs />
          <FxPanel />
          <svg width="10" height="5" className="absolute left-[1275px] top-0"><path d="M0 0H10L5 5Z" fill="#708ba3" /></svg>
        </div>
        <div className="relative pt-[18px] w-[45px] text-[9px] leading-[33px]">
          {prices.map((p) => (
            <div key={p} className="flex items-center h-[33px]">
              <div className="w-[2px] h-px bg-white mr-[2px]" />{p}
            </div>
          ))}
          <div className="absolute left-[2px] top-[398px] w-[39px] h-[11px] bg-white text-black pl-[2px] leading-[11px]">0.85014</div>
        </div>
      </div>
      <div className="flex text-[9px] leading-[13px] tracking-[0.12px] whitespace-nowrap">
        {times.map((t) => (
          <div key={t} className="w-16 shrink-0">
            <div className="ml-px w-px h-[2px] bg-white" />
            <div className="-ml-px">{t}</div>
          </div>
        ))}
      </div>
      {/* open position marker on the left edge */}
      <div className="absolute left-[2px] top-[260px] w-px h-[21px] bg-[#00e000]" />
    </div>
  );
}

function ChartTabs() {
  return (
    <div className="h-[23px] shrink-0 flex bg-[#f7f3f7] border-t-2 border-white">
      <div className="flex flex-1 border-t border-black text-xs">
        <div className="ml-1 w-[88px] h-[19px] -mt-px bg-white border-x border-b border-black pl-[9px] tracking-[0.2px] leading-[20px] text-black">EURGBP,H1</div>
        <div className="ml-[11px] leading-[19px] tracking-[0.2px] text-[#777]">EURJPY,H1</div>
        <div className="ml-[12px] mt-[3px] h-[14px] w-px bg-[#777]" />
        <div className="ml-auto flex items-center gap-[15px] pr-[9px] pb-[3px]">
          <svg width="4" height="7"><path d="M4 0V7L0 3.500Z" fill="#888" /></svg>
          <svg width="4" height="7"><path d="M0 0V7L4 3.500Z" fill="#888" /></svg>
        </div>
      </div>
    </div>
  );
}

/* ---------- orders ---------- */

const orderCols = [
  'w-[187px]', 'w-[261px]', 'w-[130px]', 'w-[101px]', 'w-[130px]', 'w-[145px]',
  'w-[145px]', 'w-[145px]', 'w-[145px]', 'w-[145px]', 'w-[145px]', 'w-[221px]',
];
const headCols = ['w-[189px]', ...orderCols.slice(1, 11), 'w-[219px]'];
const orderHeads = ['订单', '时间', '类型', '手数', '交易品种', '价格', '止损', '止盈', '价格', '手续费', '库存费', '获利'];

const PageIcon = ({ sell }) => (
  <svg width="15" height="16" viewBox="0 0 15 16" className="shrink-0">
    <path d="M0.500 1.500H8.500L11.500 4.500V13.500H0.500Z" fill="#fff" stroke="#666" />
    <path d="M8.500 1.500V4.500H11.500" fill="none" stroke="#666" />
    <circle cx="10" cy="11.500" r="3.500" fill={sell ? '#e8481c' : '#2b9ae8'} stroke={sell ? '#9c2408' : '#0f62a8'} strokeWidth=".8" />
  </svg>
);

function Terminal() {
  return (
    <div className="border-t border-[#a39fa3] bg-white text-xs text-black w-[1901px]">
      <div className="flex h-[21px] leading-[22px] border-b-2 border-[#e4e0e4]">
        {orderHeads.map((h, i) => (
          <div
            key={i}
            className={clsx(
              'shrink-0 h-[19px]',
              headCols[i],
              i < 11 && 'border-r-2 border-[#e4e0e4]',
              i === 0 ? 'pl-1.5 flex' : 'text-right',
              i > 0 && (i === 11 ? 'pr-[7px]' : 'pr-[4px]')
            )}
          >
            {h}
            {i === 0 && <svg width="5" height="9" className="ml-[11px] mt-1.5"><path d="M0.500 8.500L4 0.500" stroke="#888" /></svg>}
          </div>
        ))}
      </div>
      {orders.map((row, r) => (
        <div key={row[0]} className={clsx('flex h-[21px] leading-[19px] border-t border-[#cbc8cb]', r % 2 ? 'bg-[#efebef]' : 'bg-white')}>
          {row.map((cell, i) => (
            <div
              key={i}
              className={clsx(
                'shrink-0',
                orderCols[i],
                i < 11 && 'border-r border-[#cbc8cb]',
                i === 0 ? 'flex items-center gap-1 pl-[3px]' : 'text-right',
                i > 0 && i < 11 && 'pr-[2px]',
                i === 11 && 'flex items-center justify-end gap-[9px] pr-[7px]'
              )}
            >
              {i === 0 && <PageIcon sell={row[2] === 'sell'} />}
              {cell}
              {i === 11 && <svg width="9" height="9"><path d="M1 1L8 8M8 1L1 8" stroke="#a0a0a0" strokeWidth="2.200" /></svg>}
            </div>
          ))}
        </div>
      ))}
      <div className="flex items-center h-[21px] bg-[#cbc8cb] font-bold whitespace-pre pl-[3px]">
        <svg width="12" height="14" className="mr-[7px]">
          <rect x=".5" y=".5" width="11" height="13" rx="1" fill="#fff" stroke="#888" />
          <path d="M4.500 3H7.500V6.500H10L6 11L2 6.500H4.500Z" fill="#e8481c" stroke="#9c2408" strokeWidth=".6" />
        </svg>
        <div className="flex gap-[8px] tracking-[0.13px]">
          <span>余额: 1 139.87 USD</span>
          <span>净值: 1 112.07</span>
          <span>已用预付款: 15.55</span>
          <span>可用预付款: 1 096.52</span>
          <span>预付款比例: 7152.44%</span>
        </div>
        <span className="ml-auto mr-[26px]">-27.80</span>
      </div>
    </div>
  );
}

const Watermark = () => (
  <div className="mt-auto mb-[4px] mr-[8px] self-end flex items-center gap-[5px] text-[#f79a82]">
    <svg width="20" height="20" viewBox="0 0 20 20">
      <rect width="20" height="20" rx="3" fill="#f98f74" />
      <path d="M6.500 3L8 5.500M13.500 3L12 5.500" stroke="#fff" strokeWidth="1.500" />
      <ellipse cx="10" cy="11" rx="7" ry="5.500" fill="#fff" />
      <rect x="6" y="8.500" width="8" height="5" rx="2.500" fill="#f98f74" />
      <path d="M8.500 10V12M11.500 10V12" stroke="#fff" strokeWidth="1.200" />
    </svg>
    <span className="font-['Liberation_Mono',monospace] font-bold text-[12.500px] leading-5">EAHub</span>
  </div>
);

export default function App() {
  return (
    <div className="w-[1903px] h-[889px] overflow-hidden bg-white flex flex-col font-['Noto_Sans','Noto_Sans_CJK_SC',sans-serif]">
      <TitleBar />
      <MenuBar />
      <Toolbar />
      <div className="flex h-[583px] shrink-0 bg-[#f7f3f7] border-t-2 border-[#8c898c]">
        <div className="w-[250px] h-[577px] shrink-0 flex flex-col pr-[3px] border-r-2 border-b border-[#a39fa3]">
          <MarketWatch />
          <Navigator />
        </div>
        <div className="flex-1 min-w-0 flex flex-col">
          <Chart />
          <ChartTabs />
          <div className="h-px bg-white shrink-0" />
        </div>
      </div>
      <Terminal />
      <Watermark />
    </div>
  );
}
